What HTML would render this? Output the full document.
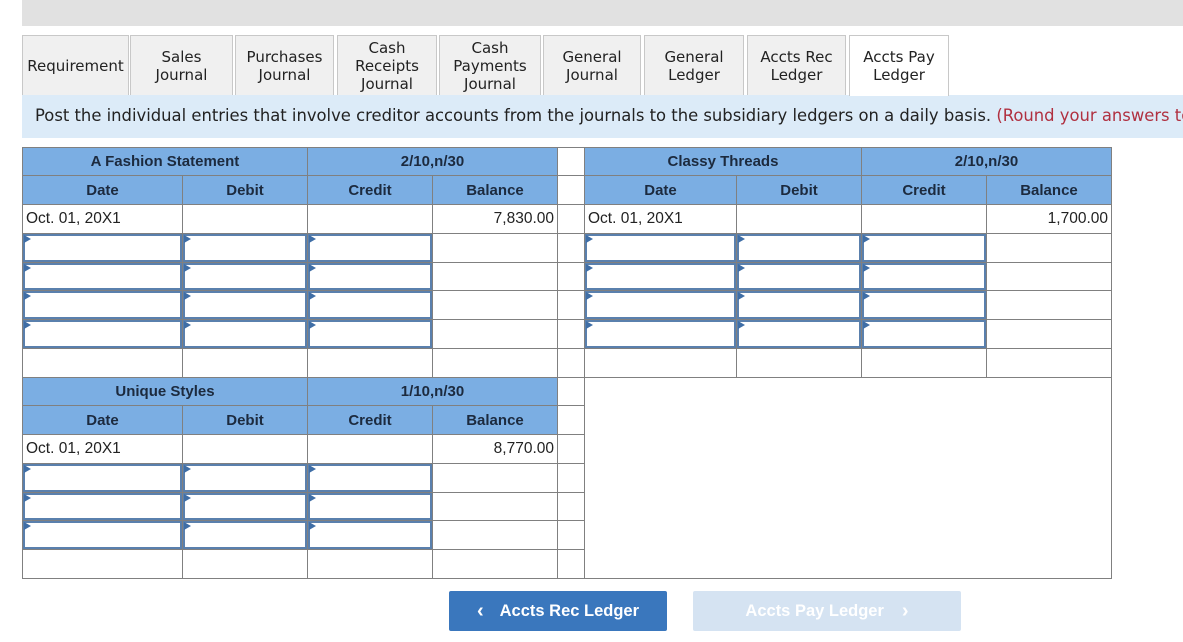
<!DOCTYPE html>
<html><head><meta charset="utf-8"><style>
body{margin:0;width:1183px;height:642px;background:#fff;position:relative;overflow:hidden;font-family:"Liberation Sans",Arial,sans-serif}
.a{position:absolute;box-sizing:border-box}
.c{position:absolute;box-sizing:border-box;border:1px solid #808080;font-size:15.5px;color:#222;display:flex;align-items:center;padding:0 3px}
.h{background:#7baee3;font-weight:bold;color:#1c2a3e;justify-content:center;font-size:15px}
.r{justify-content:flex-end}
.in{position:absolute;box-sizing:border-box;border:2px solid #5a80ad;background:#fff}
.in:before{content:"";position:absolute;left:-1px;top:-1px;border-left:7px solid #3f6ea6;border-top:4px solid transparent;border-bottom:4px solid transparent}
.tab{position:absolute;top:35px;height:60px;box-sizing:border-box;border:1px solid #c8c8c8;border-bottom:none;background:#f0f0f0;font-family:"DejaVu Sans",Verdana,sans-serif;font-size:15px;color:#222;display:flex;align-items:center;justify-content:center;text-align:center;line-height:18px}
</style></head><body>
<div class="a" style="left:22px;top:0;width:1161px;height:26px;background:#e1e1e1"></div>
<div class="tab" style="left:22px;width:107px">Requirement</div>
<div class="tab" style="left:130px;width:103px">Sales<br>Journal</div>
<div class="tab" style="left:235px;width:99px">Purchases<br>Journal</div>
<div class="tab" style="left:337px;width:100px">Cash<br>Receipts<br>Journal</div>
<div class="tab" style="left:439px;width:102px">Cash<br>Payments<br>Journal</div>
<div class="tab" style="left:543px;width:98px">General<br>Journal</div>
<div class="tab" style="left:644px;width:100px">General<br>Ledger</div>
<div class="tab" style="left:747px;width:99px">Accts Rec<br>Ledger</div>
<div class="a" style="left:22px;top:95px;width:1161px;height:43px;background:#dcebf8"></div>
<div class="tab" style="left:849px;width:100px;height:61px;background:#fff">Accts Pay<br>Ledger</div>
<div class="a" style="left:35px;top:106px;width:1200px;white-space:nowrap;font-family:'DejaVu Sans',Verdana,sans-serif;font-size:16.4px;color:#222">Post the individual entries that involve creditor accounts from the journals to the subsidiary ledgers on a daily basis. <span style="color:#b03040">(Round your answers to</span></div>

<div class="c h" style="left:22px;top:147px;width:286px;height:29px">A Fashion Statement</div>
<div class="c h" style="left:307px;top:147px;width:251px;height:29px">2/10,n/30</div>
<div class="c" style="left:557px;top:147px;width:28px;height:29px"></div>
<div class="c h" style="left:584px;top:147px;width:278px;height:29px">Classy Threads</div>
<div class="c h" style="left:861px;top:147px;width:251px;height:29px">2/10,n/30</div>

<div class="c h" style="left:22px;top:175px;width:161px;height:30px">Date</div>
<div class="c h" style="left:182px;top:175px;width:126px;height:30px">Debit</div>
<div class="c h" style="left:307px;top:175px;width:126px;height:30px">Credit</div>
<div class="c h" style="left:432px;top:175px;width:126px;height:30px">Balance</div>
<div class="c" style="left:557px;top:175px;width:28px;height:30px"></div>
<div class="c h" style="left:584px;top:175px;width:153px;height:30px">Date</div>
<div class="c h" style="left:736px;top:175px;width:126px;height:30px">Debit</div>
<div class="c h" style="left:861px;top:175px;width:126px;height:30px">Credit</div>
<div class="c h" style="left:986px;top:175px;width:126px;height:30px">Balance</div>

<div class="c" style="left:22px;top:204px;width:161px;height:30px">Oct. 01, 20X1</div>
<div class="c" style="left:182px;top:204px;width:126px;height:30px"></div>
<div class="c" style="left:307px;top:204px;width:126px;height:30px"></div>
<div class="c r" style="left:432px;top:204px;width:126px;height:30px">7,830.00</div>
<div class="c" style="left:557px;top:204px;width:28px;height:30px"></div>
<div class="c" style="left:584px;top:204px;width:153px;height:30px">Oct. 01, 20X1</div>
<div class="c" style="left:736px;top:204px;width:126px;height:30px"></div>
<div class="c" style="left:861px;top:204px;width:126px;height:30px"></div>
<div class="c r" style="left:986px;top:204px;width:126px;height:30px">1,700.00</div>

<div class="c" style="left:22px;top:233px;width:161px;height:145px"></div>
<div class="c" style="left:182px;top:233px;width:126px;height:145px"></div>
<div class="c" style="left:307px;top:233px;width:126px;height:145px"></div>
<div class="c" style="left:432px;top:233px;width:126px;height:145px"></div>
<div class="c" style="left:557px;top:233px;width:28px;height:145px"></div>
<div class="c" style="left:584px;top:233px;width:153px;height:145px"></div>
<div class="c" style="left:736px;top:233px;width:126px;height:145px"></div>
<div class="c" style="left:861px;top:233px;width:126px;height:145px"></div>
<div class="c" style="left:986px;top:233px;width:126px;height:145px"></div>
<div class="a" style="left:22px;top:262px;width:1090px;height:1px;background:#808080"></div>
<div class="a" style="left:22px;top:290px;width:1090px;height:1px;background:#808080"></div>
<div class="a" style="left:22px;top:319px;width:1090px;height:1px;background:#808080"></div>
<div class="a" style="left:22px;top:348px;width:1090px;height:1px;background:#808080"></div>

<div class="in" style="left:23px;top:234px;width:159px;height:28px"></div><div class="in" style="left:183px;top:234px;width:124px;height:28px"></div><div class="in" style="left:308px;top:234px;width:124px;height:28px"></div>
<div class="in" style="left:585px;top:234px;width:151px;height:28px"></div><div class="in" style="left:737px;top:234px;width:124px;height:28px"></div><div class="in" style="left:862px;top:234px;width:124px;height:28px"></div>
<div class="in" style="left:23px;top:263px;width:159px;height:27px"></div><div class="in" style="left:183px;top:263px;width:124px;height:27px"></div><div class="in" style="left:308px;top:263px;width:124px;height:27px"></div>
<div class="in" style="left:585px;top:263px;width:151px;height:27px"></div><div class="in" style="left:737px;top:263px;width:124px;height:27px"></div><div class="in" style="left:862px;top:263px;width:124px;height:27px"></div>
<div class="in" style="left:23px;top:291px;width:159px;height:28px"></div><div class="in" style="left:183px;top:291px;width:124px;height:28px"></div><div class="in" style="left:308px;top:291px;width:124px;height:28px"></div>
<div class="in" style="left:585px;top:291px;width:151px;height:28px"></div><div class="in" style="left:737px;top:291px;width:124px;height:28px"></div><div class="in" style="left:862px;top:291px;width:124px;height:28px"></div>
<div class="in" style="left:23px;top:320px;width:159px;height:28px"></div><div class="in" style="left:183px;top:320px;width:124px;height:28px"></div><div class="in" style="left:308px;top:320px;width:124px;height:28px"></div>
<div class="in" style="left:585px;top:320px;width:151px;height:28px"></div><div class="in" style="left:737px;top:320px;width:124px;height:28px"></div><div class="in" style="left:862px;top:320px;width:124px;height:28px"></div>

<div class="c" style="left:584px;top:377px;width:528px;height:202px"></div>
<div class="c h" style="left:22px;top:377px;width:286px;height:29px">Unique Styles</div>
<div class="c h" style="left:307px;top:377px;width:251px;height:29px">1/10,n/30</div>
<div class="c" style="left:557px;top:377px;width:28px;height:29px"></div>
<div class="c h" style="left:22px;top:405px;width:161px;height:30px">Date</div>
<div class="c h" style="left:182px;top:405px;width:126px;height:30px">Debit</div>
<div class="c h" style="left:307px;top:405px;width:126px;height:30px">Credit</div>
<div class="c h" style="left:432px;top:405px;width:126px;height:30px">Balance</div>
<div class="c" style="left:557px;top:405px;width:28px;height:30px"></div>
<div class="c" style="left:22px;top:434px;width:161px;height:30px">Oct. 01, 20X1</div>
<div class="c" style="left:182px;top:434px;width:126px;height:30px"></div>
<div class="c" style="left:307px;top:434px;width:126px;height:30px"></div>
<div class="c r" style="left:432px;top:434px;width:126px;height:30px">8,770.00</div>
<div class="c" style="left:557px;top:434px;width:28px;height:30px"></div>
<div class="c" style="left:22px;top:463px;width:161px;height:116px"></div>
<div class="c" style="left:182px;top:463px;width:126px;height:116px"></div>
<div class="c" style="left:307px;top:463px;width:126px;height:116px"></div>
<div class="c" style="left:432px;top:463px;width:126px;height:116px"></div>
<div class="c" style="left:557px;top:463px;width:28px;height:116px"></div>
<div class="a" style="left:22px;top:492px;width:563px;height:1px;background:#808080"></div>
<div class="a" style="left:22px;top:520px;width:563px;height:1px;background:#808080"></div>
<div class="a" style="left:22px;top:549px;width:563px;height:1px;background:#808080"></div>
<div class="in" style="left:23px;top:464px;width:159px;height:28px"></div><div class="in" style="left:183px;top:464px;width:124px;height:28px"></div><div class="in" style="left:308px;top:464px;width:124px;height:28px"></div>
<div class="in" style="left:23px;top:493px;width:159px;height:27px"></div><div class="in" style="left:183px;top:493px;width:124px;height:27px"></div><div class="in" style="left:308px;top:493px;width:124px;height:27px"></div>
<div class="in" style="left:23px;top:521px;width:159px;height:28px"></div><div class="in" style="left:183px;top:521px;width:124px;height:28px"></div><div class="in" style="left:308px;top:521px;width:124px;height:28px"></div>

<div class="a" style="left:449px;top:591px;width:218px;height:40px;background:#3a77bd;border-radius:2px;color:#fff;font-weight:bold;font-size:16.5px;display:flex;align-items:center;justify-content:center;gap:16px"><span style="font-size:20px">&#8249;</span>Accts Rec Ledger</div>
<div class="a" style="left:693px;top:591px;width:268px;height:40px;background:#d5e3f2;border-radius:2px;color:#fff;font-weight:bold;font-size:16.5px;display:flex;align-items:center;justify-content:center;gap:18px">Accts Pay Ledger<span style="font-size:20px">&#8250;</span></div>
</body></html>
